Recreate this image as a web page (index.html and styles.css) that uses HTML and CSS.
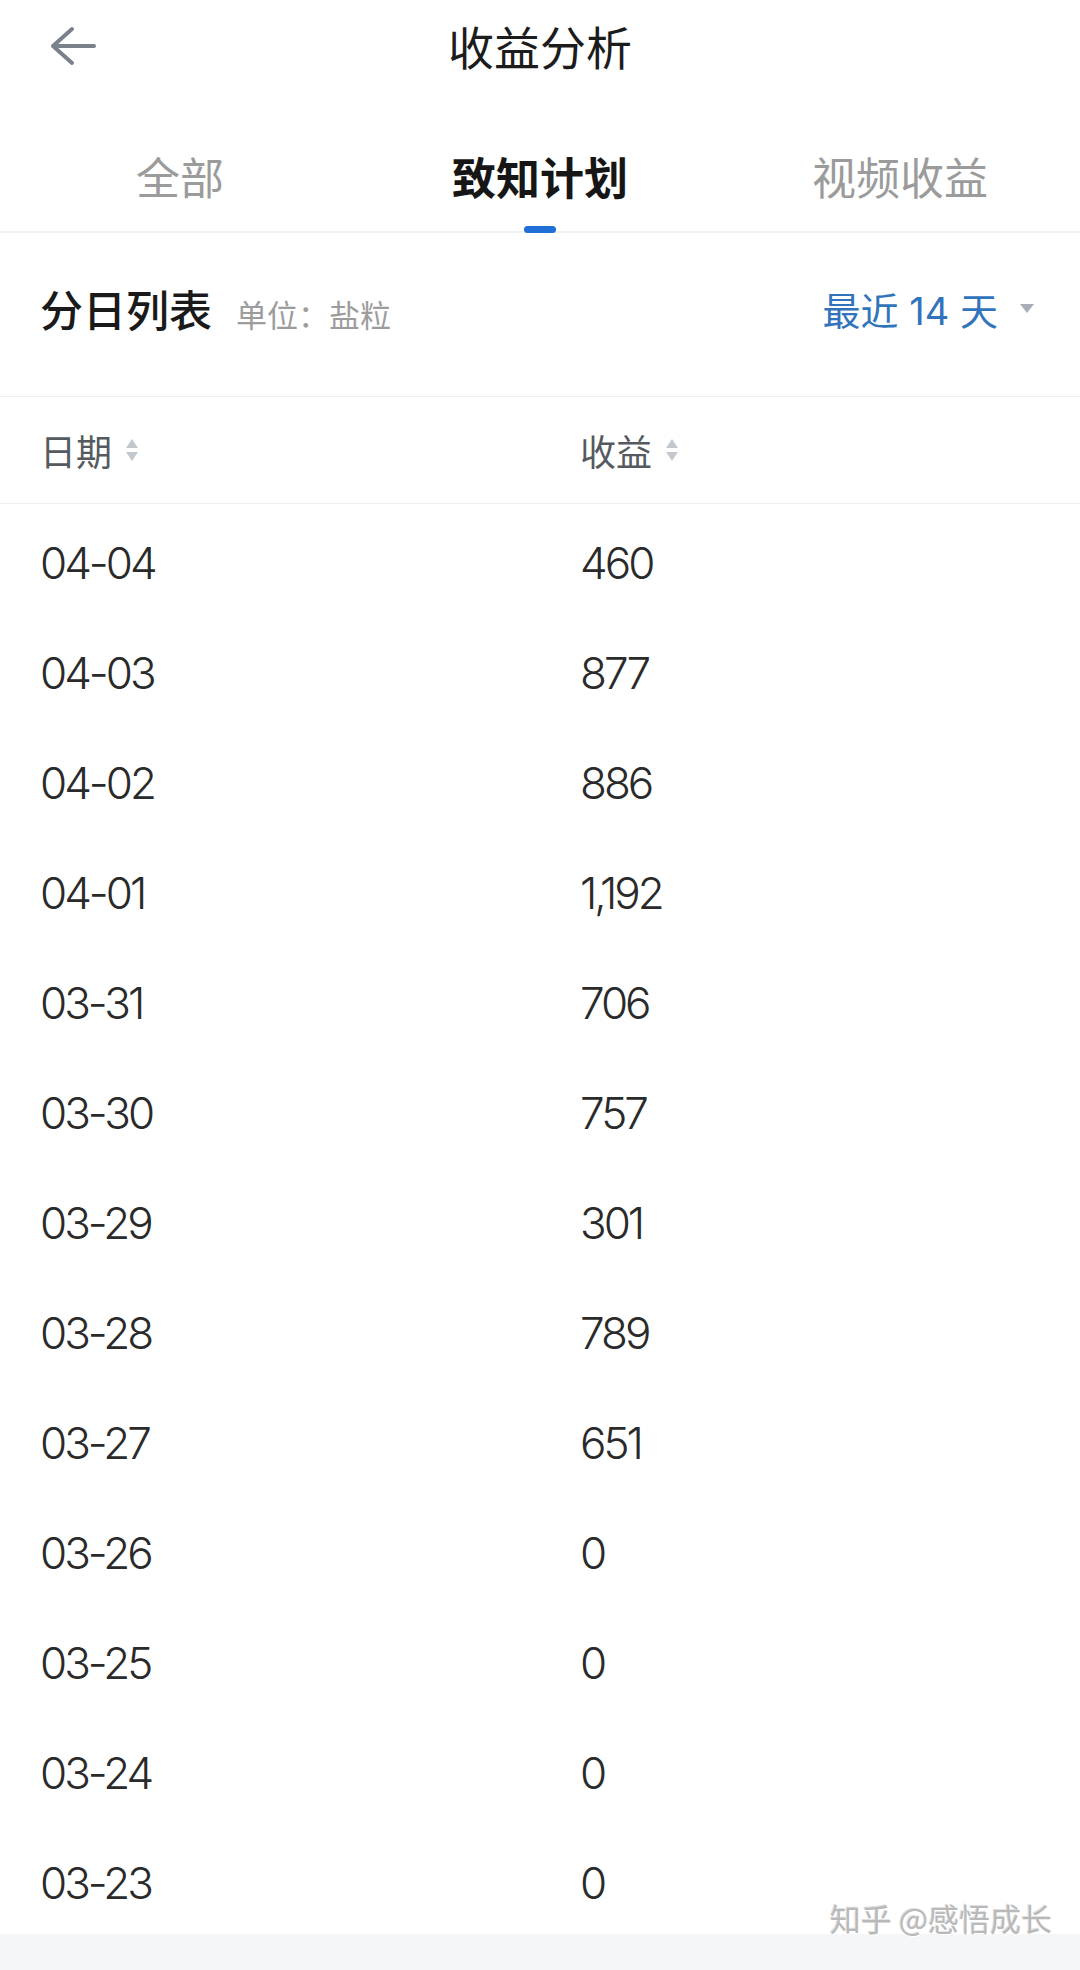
FILE: index.html
```html
<!DOCTYPE html>
<html lang="zh-CN">
<head>
    <meta charset="UTF-8">
    <meta name="viewport" content="width=device-width, initial-scale=1.0">
    <title>收益分析</title>
    <link rel="stylesheet" href="styles.css">
</head>
<body>
    <div class="page">
        <header class="topbar">
            <svg class="back" width="48" height="40" viewBox="0 0 48 40">
                <path d="M24 3 L5 20 L24 37 M5 20 L46 20" fill="none" stroke="#7b818b" stroke-width="4" stroke-linecap="round" stroke-linejoin="round"/>
            </svg>
            <h1 class="title">收益分析</h1>
        </header>

        <nav class="tabs">
            <div class="tab"><span class="tab-text">全部</span><span class="bar"></span></div>
            <div class="tab active"><span class="tab-text">致知计划</span><span class="bar"></span></div>
            <div class="tab"><span class="tab-text">视频收益</span><span class="bar"></span></div>
        </nav>

        <section class="list-head">
            <div class="list-title">
                <span class="name">分日列表</span>
                <span class="unit">单位：盐粒</span>
            </div>
            <div class="range">
                最近 14 天
                <span class="caret"></span>
            </div>
        </section>

        <div class="table">
            <div class="row head">
                <div class="cell">日期 <span class="sort"><i class="up"></i><i class="down"></i></span></div>
                <div class="cell">收益 <span class="sort"><i class="up"></i><i class="down"></i></span></div>
            </div>
            <div class="row"><div class="cell">04-04</div><div class="cell">460</div></div>
            <div class="row"><div class="cell">04-03</div><div class="cell">877</div></div>
            <div class="row"><div class="cell">04-02</div><div class="cell">886</div></div>
            <div class="row"><div class="cell">04-01</div><div class="cell">1,192</div></div>
            <div class="row"><div class="cell">03-31</div><div class="cell">706</div></div>
            <div class="row"><div class="cell">03-30</div><div class="cell">757</div></div>
            <div class="row"><div class="cell">03-29</div><div class="cell">301</div></div>
            <div class="row"><div class="cell">03-28</div><div class="cell">789</div></div>
            <div class="row"><div class="cell">03-27</div><div class="cell">651</div></div>
            <div class="row"><div class="cell">03-26</div><div class="cell">0</div></div>
            <div class="row"><div class="cell">03-25</div><div class="cell">0</div></div>
            <div class="row"><div class="cell">03-24</div><div class="cell">0</div></div>
            <div class="row"><div class="cell">03-23</div><div class="cell">0</div></div>
        </div>

        <footer class="foot"></footer>
        <div class="watermark">知乎 @感悟成长</div>
    </div>
</body>
</html>
```

FILE: styles.css
```css
body {
    margin: 0;
    background: #ffffff;
    font-family: Roboto, "Noto Sans CJK SC", sans-serif;
    color: #2b2b2b;
}

.page {
    position: relative;
    width: 1080px;
    min-height: 1970px;
    display: flex;
    flex-direction: column;
}

.topbar {
    height: 90px;
    display: flex;
    align-items: center;
    justify-content: center;
    position: relative;
}

.back {
    position: absolute;
    left: 48px;
    top: 26px;
}

.title {
    margin: 0;
    font-size: 46px;
    font-weight: 400;
    color: #1c1c1c;
    font-family: "Noto Sans CJK SC", sans-serif;
}

.tabs {
    display: grid;
    grid-template-columns: repeat(3, 1fr);
    border-bottom: 2px solid #f0f0f2;
}

.tab {
    display: flex;
    flex-direction: column;
    align-items: center;
    padding-top: 56px;
}

.tab-text {
    font-family: "Noto Sans CJK SC", sans-serif;
    font-size: 44px;
    line-height: 60px;
    color: #9b9b9b;
}

.bar {
    width: 32px;
    height: 7px;
    margin-top: 20px;
    margin-bottom: -2px;
    border-radius: 4px;
}

.tab.active .tab-text {
    color: #161616;
    font-weight: 700;
}

.tab.active .bar {
    background: #1f6fd6;
}

.list-head {
    height: 164px;
    box-sizing: border-box;
    padding: 45px 46px 0 40px;
    display: flex;
    justify-content: space-between;
    border-bottom: 1px solid #efeff1;
}

.list-title {
    display: flex;
    align-items: baseline;
    gap: 24px;
    height: 60px;
    font-family: "Noto Sans CJK SC", sans-serif;
}

.name {
    font-size: 43px;
    line-height: 60px;
    color: #1a1a1a;
    font-weight: 500;
}

.unit {
    font-size: 31px;
    color: #9c9c9c;
}

.range {
    display: flex;
    align-items: center;
    height: 60px;
    gap: 22px;
    font-size: 38px;
    color: #3174bb;
    font-family: Inter, "Noto Sans CJK SC", sans-serif;
}

.caret {
    width: 0;
    height: 0;
    border-left: 7px solid transparent;
    border-right: 7px solid transparent;
    border-top: 9px solid #a7aeb8;
}

.row {
    display: grid;
    grid-template-columns: 540px 1fr;
    height: 110px;
    align-items: center;
    padding-left: 40px;
    font-family: Inter, "Noto Sans CJK SC", sans-serif;
    font-size: 44px;
    font-weight: 300;
    letter-spacing: -3px;
    color: #2a2a2a;
}

.row .cell {
    display: flex;
    align-items: center;
    padding-top: 8px;
}

.row.head {
    height: 106px;
    border-bottom: 1px solid #efeff1;
    font-family: "Noto Sans CJK SC", sans-serif;
    font-size: 36px;
    font-weight: 400;
    letter-spacing: 0;
    color: #555a60;
}

.row.head .cell {
    padding-top: 0;
}

.sort {
    display: flex;
    flex-direction: column;
    gap: 4px;
    margin-left: 14px;
}

.sort i {
    width: 0;
    height: 0;
    border-left: 6px solid transparent;
    border-right: 6px solid transparent;
}

.sort .up {
    border-bottom: 9px solid #c3c7ce;
}

.sort .down {
    border-top: 9px solid #c3c7ce;
}

.foot {
    flex: 1;
    background: #f5f6f8;
}

.watermark {
    position: absolute;
    right: 28px;
    bottom: 30px;
    font-family: "Noto Sans CJK SC", sans-serif;
    font-size: 31px;
    color: #b9b9b9;
    text-shadow: 1px 1px 0 #ffffff, -1px -1px 0 #e0e0e0;
}
```
